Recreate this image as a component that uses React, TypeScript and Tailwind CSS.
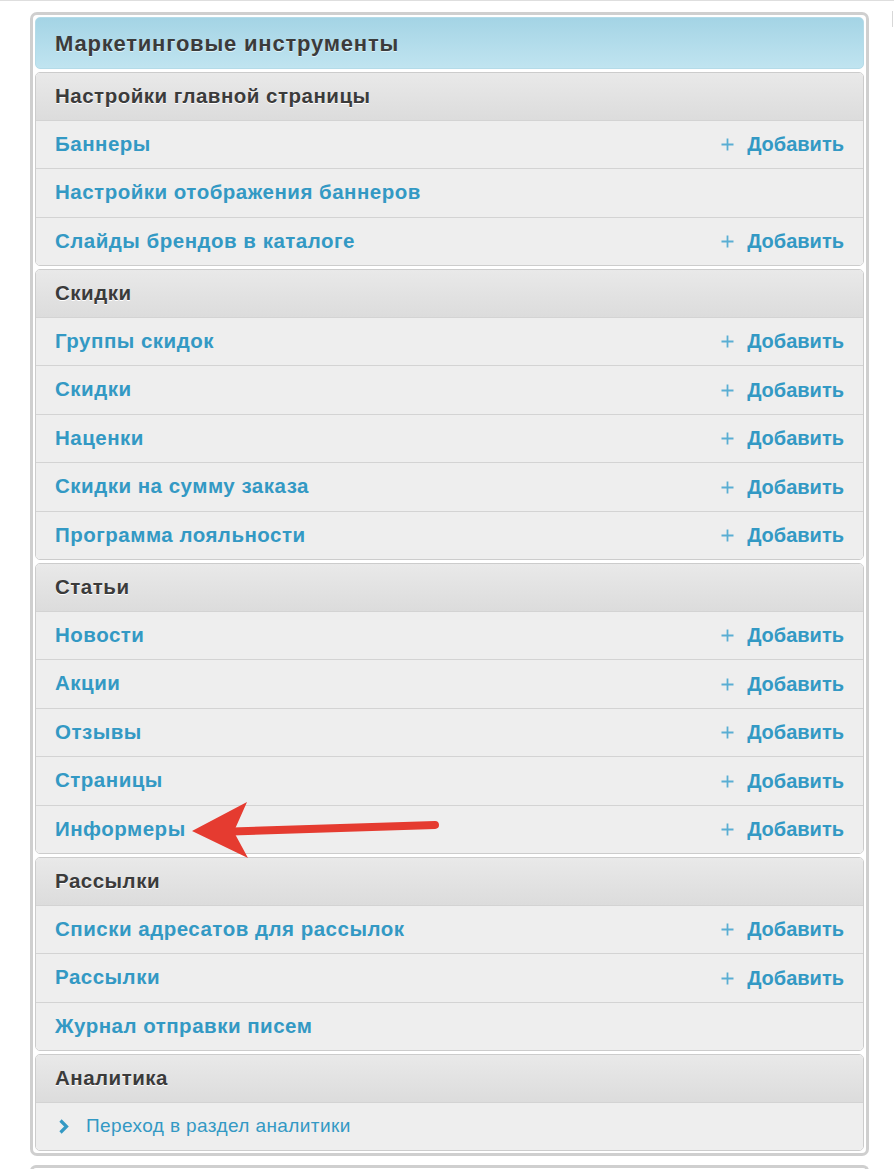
const sections = [
  {
    title: "Настройки главной страницы",
    rows: [
      { label: "Баннеры", add: true },
      { label: "Настройки отображения баннеров", add: false },
      { label: "Слайды брендов в каталоге", add: true },
    ],
  },
  {
    title: "Скидки",
    rows: [
      { label: "Группы скидок", add: true },
      { label: "Скидки", add: true },
      { label: "Наценки", add: true },
      { label: "Скидки на сумму заказа", add: true },
      { label: "Программа лояльности", add: true },
    ],
  },
  {
    title: "Статьи",
    rows: [
      { label: "Новости", add: true },
      { label: "Акции", add: true },
      { label: "Отзывы", add: true },
      { label: "Страницы", add: true },
      { label: "Информеры", add: true },
    ],
  },
  {
    title: "Рассылки",
    rows: [
      { label: "Списки адресатов для рассылок", add: true },
      { label: "Рассылки", add: true },
      { label: "Журнал отправки писем", add: false },
    ],
  },
];

const font = { fontFamily: '"Liberation Sans", Arial, sans-serif' };

function SectionHeader({ title }: { title: string }) {
  return (
    <div className="h-[46.5px] flex items-center pl-[19px] bg-gradient-to-b from-[#e9e9e9] to-[#dcdcdc] text-[20.5px] tracking-[0.5px] font-bold text-[#3b3b3b] [text-shadow:0_1px_0_#fff]">
      {title}
    </div>
  );
}

function Row({ label, add }: { label: string; add: boolean }) {
  return (
    <div className="h-[48.5px] flex items-center justify-between border-t border-[#d3d3d3] bg-[#eeeeee] pl-[19px] pr-[19px]">
      <span className="text-[20.5px] tracking-[0.5px] font-bold text-[#3399c4]">{label}</span>
      {add && (
        <span className="flex items-center gap-[13px] text-[20px] font-bold text-[#3399c4]">
          <svg width="13" height="13" viewBox="0 0 13 13" className="mt-[1px]">
            <path d="M6.5 0.5v12M0.5 6.5h12" stroke="#5aaed3" strokeWidth="1.8" />
          </svg>
          Добавить
        </span>
      )}
    </div>
  );
}

export default function App() {
  return (
    <div className="relative w-[894px] h-[1169px] overflow-hidden bg-white" style={font}>
      {/* верхняя линия */}
      <div className="flex h-[12px] border-t border-[#dedede]">
        <div className="ml-auto mt-[10px] mr-[1px] w-px h-[16px] bg-[#d8d8d8]" />
      </div>

      <div className="ml-[30px] w-[839px] rounded-[7px] border-[3px] border-[#cfcfcf] bg-white p-[2px]">
        <div className="flex flex-col gap-[3px]">
          <div className="h-[52px] flex items-center pl-[19px] rounded-[5px] border border-[#b5dbe8] bg-gradient-to-b from-[#a4d4e5] to-[#c0e4f0] text-[22px] tracking-[0.8px] font-bold text-[#3b3b3b] [text-shadow:0_1px_0_rgba(255,255,255,0.6)]">
            Маркетинговые инструменты
          </div>

          {sections.map((s) => (
            <div key={s.title} className="rounded-[5px] border border-[#cccccc] overflow-hidden">
              <SectionHeader title={s.title} />
              {s.rows.map((r) => (
                <Row key={r.label} label={r.label} add={r.add} />
              ))}
            </div>
          ))}

          {/* Аналитика */}
          <div className="rounded-[5px] border border-[#cccccc] overflow-hidden">
            <SectionHeader title="Аналитика" />
            <div className="h-[48.5px] flex items-center border-t border-[#d3d3d3] bg-[#eeeeee] pl-[22px]">
              <svg width="11" height="15" viewBox="0 0 11 15">
                <path d="M2.5 1.5l6 6l-6 6" fill="none" stroke="#3399c4" strokeWidth="3.2" />
              </svg>
              <span className="ml-[17px] text-[19px] tracking-[0.4px] text-[#3399c4]">Переход в раздел аналитики</span>
            </div>
          </div>
        </div>
      </div>

      {/* следующий блок */}
      <div className="ml-[30px] mt-[9px] w-[839px] h-[6px] rounded-t-[7px] border-t-[3px] border-x-[3px] border-[#cfcfcf]" />

      {/* красная стрелка */}
      <svg className="absolute left-0 top-0 pointer-events-none" width="894" height="1169">
        <line x1="232" y1="831.5" x2="435" y2="825" stroke="#e53b30" strokeWidth="8" strokeLinecap="round" />
        <path d="M192 831 L247 802 L235 829 L235 834 L248 858 Z" fill="#e53b30" />
      </svg>
    </div>
  );
}
